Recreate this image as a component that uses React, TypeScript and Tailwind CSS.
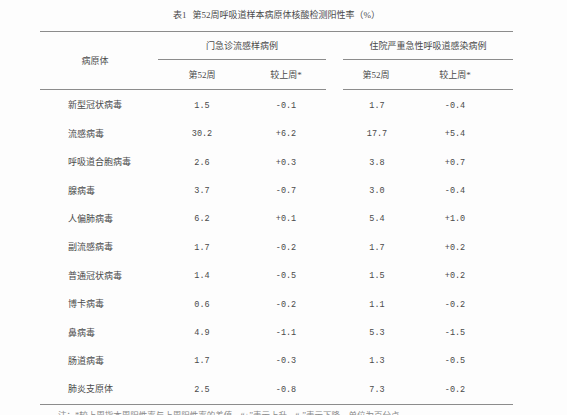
const rows: [string, string, string, string, string][] = [
  ["新型冠状病毒", "1.5", "-0.1", "1.7", "-0.4"],
  ["流感病毒", "30.2", "+6.2", "17.7", "+5.4"],
  ["呼吸道合胞病毒", "2.6", "+0.3", "3.8", "+0.7"],
  ["腺病毒", "3.7", "-0.7", "3.0", "-0.4"],
  ["人偏肺病毒", "6.2", "+0.1", "5.4", "+1.0"],
  ["副流感病毒", "1.7", "-0.2", "1.7", "+0.2"],
  ["普通冠状病毒", "1.4", "-0.5", "1.5", "+0.2"],
  ["博卡病毒", "0.6", "-0.2", "1.1", "-0.2"],
  ["鼻病毒", "4.9", "-1.1", "5.3", "-1.5"],
  ["肠道病毒", "1.7", "-0.3", "1.3", "-0.5"],
  ["肺炎支原体", "2.5", "-0.8", "7.3", "-0.2"],
];

const grid = "grid grid-cols-[118px_88px_80px_17px_68px_102px]";
const num = "flex items-center justify-center font-['Liberation_Mono','Noto_Sans_CJK_SC',monospace] text-[8.5px]";

export default function App() {
  return (
    <div className="h-[415px] w-[567px] overflow-hidden bg-[#fdfdfd] font-['Liberation_Serif','Noto_Sans_CJK_SC',serif] text-[9px] text-[#4a4a4a]">
      <div className="ml-[40px] w-[473px]">
        <div className="flex h-[31px] items-center justify-center pt-[1px] text-[9px]">
          <span>表1</span>
          <span className="ml-[6px]">第52周呼吸道样本病原体核酸检测阳性率（%）</span>
        </div>

        <div className={`${grid} grid-rows-[28px_30px] border-t-[1.5px] border-[#8c8c8c]`}>
          <div className="row-span-2 flex items-center justify-center border-b-[1.5px] border-[#8c8c8c] pr-[8px] pt-[2px]">
            病原体
          </div>
          <div className="col-span-2 flex items-center justify-center border-b-[1.5px] border-[#8c8c8c] pt-[3px]">
            门急诊流感样病例
          </div>
          <div />
          <div className="col-span-2 flex items-center justify-center border-b-[1.5px] border-[#8c8c8c] pt-[3px]">
            住院严重急性呼吸道感染病例
          </div>

          <div className="flex items-center justify-center border-b-[1.5px] border-[#8c8c8c] pt-[2px]">第52周</div>
          <div className="flex items-center justify-center border-b-[1.5px] border-[#8c8c8c] pt-[2px]">较上周*</div>
          <div />
          <div className="flex items-center justify-center border-b-[1.5px] border-[#8c8c8c] pt-[2px] pr-[2px]">第52周</div>
          <div className="flex items-center justify-center border-b-[1.5px] border-[#8c8c8c] pt-[2px] pr-[14px]">较上周*</div>
        </div>

        <div className="border-b-[1.5px] border-[#8c8c8c] pt-[2px]">
          {rows.map((r) => (
            <div key={r[0]} className={`${grid} h-[28.4px]`}>
              <div className="flex items-center pl-[28px]">{r[0]}</div>
              <div className={num}>{r[1]}</div>
              <div className={num}>{r[2]}</div>
              <div />
              <div className={num}>{r[3]}</div>
              <div className={`${num} pr-[14px]`}>{r[4]}</div>
            </div>
          ))}
        </div>

        <p className="mt-[4px] pl-[18px] text-[8.5px] whitespace-nowrap text-[#8a8a8a]">
          注：*较上周指本周阳性率与上周阳性率的差值，“+”表示上升，“-”表示下降，单位为百分点。
        </p>
      </div>
    </div>
  );
}
